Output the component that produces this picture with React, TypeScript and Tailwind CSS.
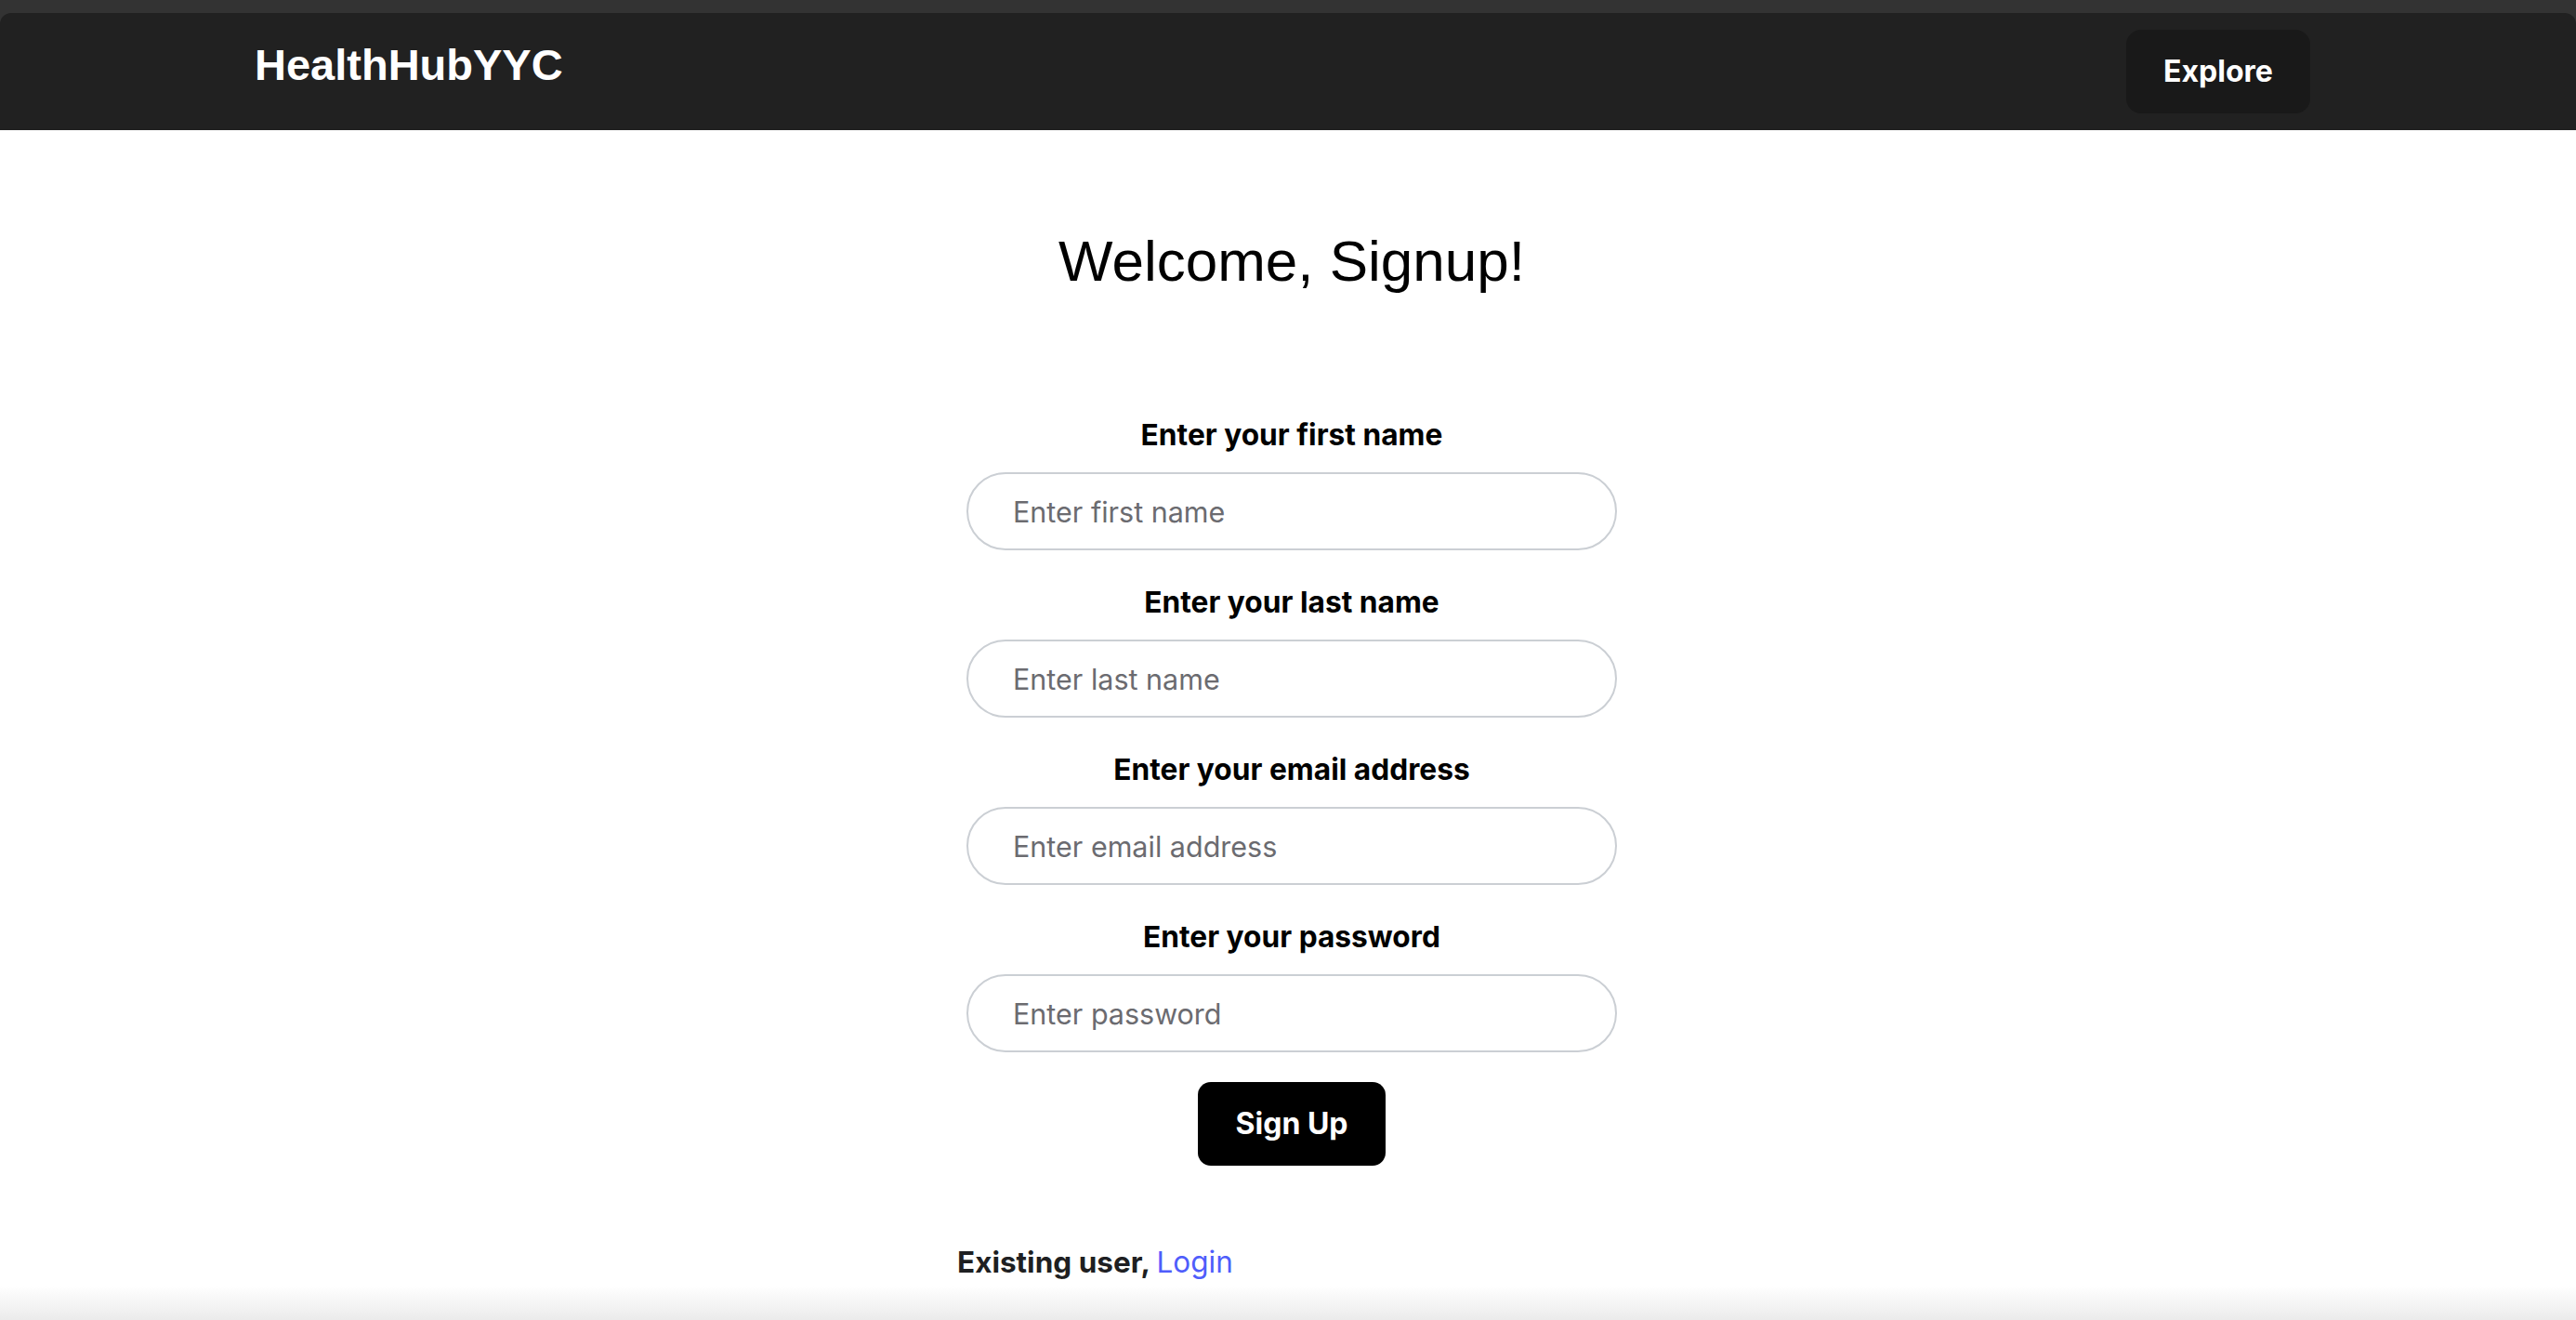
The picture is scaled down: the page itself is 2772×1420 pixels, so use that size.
import { useState } from 'react';

// Signup page for HealthHubYYC
interface Field {
  name: string;
  label: string;
  placeholder: string;
  type: string;
}

const fields: Field[] = [
  { name: 'first_name', label: 'Enter your first name', placeholder: 'Enter first name', type: 'text' },
  { name: 'last_name', label: 'Enter your last name', placeholder: 'Enter last name', type: 'text' },
  { name: 'email', label: 'Enter your email address', placeholder: 'Enter email address', type: 'email' },
  { name: 'password', label: 'Enter your password', placeholder: 'Enter password', type: 'password' },
];

function Header() {
  return (
    <div className="bg-[#333333] pt-[14px]">
      <header className="flex h-[126px] items-start justify-between rounded-t-[12px] bg-[#212121] pl-[274px] pr-[286px]">
        <h1 className="mt-[29px] font-['Liberation_Sans',Arial,sans-serif] text-[47px] font-bold leading-[54px] text-white">
          HealthHubYYC
        </h1>
        <button
          type="button"
          className="mt-[18px] flex h-[90px] w-[198px] items-center justify-center rounded-[16px] bg-[#191919] text-[32px] font-bold text-white"
        >
          Explore
        </button>
      </header>
    </div>
  );
}

export default function App() {
  const [values, setValues] = useState<Record<string, string>>({});

  const onChange = (name: string, value: string) => {
    setValues((prev) => ({ ...prev, [name]: value }));
  };

  return (
    <div className="flex h-screen flex-col overflow-hidden bg-white font-['Inter','Noto_Sans',sans-serif]">
      <Header />

      <main className="flex flex-1 flex-col items-center pl-[8px]">
        <h2 className="mt-[110px] font-['Liberation_Sans',Arial,sans-serif] text-[62px] font-normal leading-[62px] text-black">
          Welcome, Signup!
        </h2>

        <form className="mt-[135px] flex w-[700px] flex-col items-center" onSubmit={(e) => e.preventDefault()}>
          {fields.map((field) => (
            <div key={field.name} className="mb-[35px] flex w-full flex-col items-center">
              <label htmlFor={field.name} className="text-[31.7px] font-bold leading-[42px] text-black">
                {field.label}
              </label>
              <input
                id={field.name}
                type={field.type}
                placeholder={field.placeholder}
                value={values[field.name] || ''}
                onChange={(e) => onChange(field.name, e.target.value)}
                className="mt-[19px] h-[84px] w-full rounded-full border-2 border-[#cbcfd4] px-[48px] text-[30.5px] text-black outline-none placeholder:text-[#6b6b70]"
              />
            </div>
          ))}

          <button
            type="submit"
            className="-mt-[3px] h-[90px] w-[202px] rounded-[14px] bg-black text-[32px] font-bold text-white"
          >
            Sign Up
          </button>
        </form>

        <div className="mt-[80px] w-[720px] text-left text-[31.5px] leading-[48px]">
          <span className="font-bold text-[#1e1f22]">Existing user, </span>
          <a href="#" className="text-[#4f5dfb]">
            Login
          </a>
        </div>
      </main>

      <div className="h-[37px] shrink-0 bg-linear-to-b from-white to-[#ebebeb]" />
    </div>
  );
}
